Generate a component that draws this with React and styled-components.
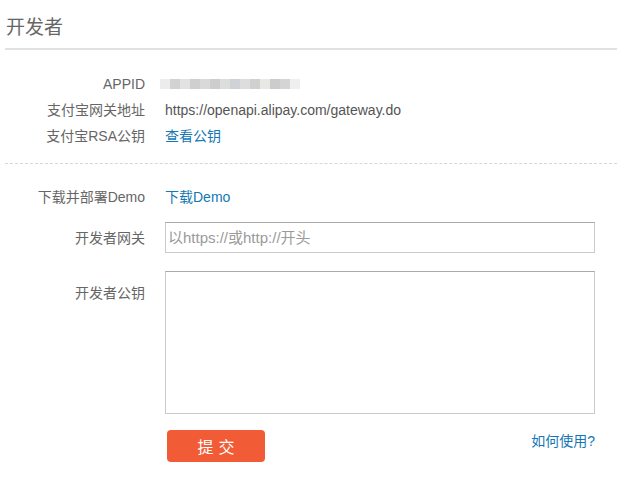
import React from "react";
import styled, { createGlobalStyle } from "styled-components";

const Global = createGlobalStyle`
  html, body { margin: 0; padding: 0; background: #fff; }
  body { font-family: "Liberation Sans", Arial, "Noto Sans CJK SC", sans-serif; color: #666; }
  * { box-sizing: border-box; }
`;

const Page = styled.div`
  width: 618px;
  padding: 0 1px 0 5px;
`;

const Header = styled.div`
  padding-top: 14px;
  padding-bottom: 6px;
  border-bottom: 2px solid #e1e1e1;
`;

const Title = styled.h2`
  margin: 0 0 0 1px;
  font-size: 19px;
  line-height: 28px;
  font-weight: normal;
  color: #666;
`;

const Section = styled.div`
  display: grid;
  grid-template-columns: 140px 430px;
  column-gap: 20px;
  align-items: center;
  padding-top: ${(p) => p.$top || 0}px;
  padding-bottom: ${(p) => p.$bottom || 0}px;
  border-bottom: ${(p) => (p.$dashed ? "1px dashed #d6d6d6" : "none")};
`;

const Label = styled.div`
  text-align: right;
  font-size: 14px;
  line-height: 26px;
  color: #666;
  align-self: ${(p) => (p.$top ? "start" : "center")};
  padding-top: ${(p) => p.$pt || 0}px;
  white-space: nowrap;
`;

const Value = styled.div`
  font-size: 14px;
  line-height: 26px;
  color: #555;
  white-space: nowrap;
`;

const Link = styled.a`
  color: #1577b3;
  text-decoration: none;
  font-size: 14px;
  line-height: 26px;
  cursor: pointer;
`;

const Blur = styled.div`
  display: flex;
  align-items: center;
  height: 26px;
  margin-left: -5px;
`;

const BlurBlock = styled.span`
  display: block;
  width: 10px;
  height: 10px;
  background: ${(p) => p.$c};
  filter: blur(0.6px);
`;

const Input = styled.input`
  width: 430px;
  height: 31px;
  border: 1px solid #cacaca;
  border-top-color: #a9a9a9;
  padding: 0 2px;
  font-size: 15px;
  font-family: inherit;
  color: #555;
  outline: none;
  &::placeholder { color: #9a9a9a; }
`;

const TextArea = styled.textarea`
  display: block;
  width: 430px;
  height: 143px;
  border: 1px solid #cacaca;
  border-top-color: #a9a9a9;
  resize: none;
  outline: none;
  font-family: inherit;
`;

const Actions = styled.div`
  display: flex;
  justify-content: space-between;
  align-items: center;
  padding-left: 2px;
`;

const Submit = styled.button`
  width: 98px;
  height: 32px;
  border: none;
  border-radius: 4px;
  background: #f15b35;
  color: #fff;
  font-size: 16px;
  font-family: "Noto Sans CJK SC", sans-serif;
  letter-spacing: 5px;
  padding: 0 0 0 5px;
  cursor: pointer;
`;

const HelpLink = styled(Link)`
  margin-top: -11px;
`;

const blurColors = [
  "#ececec", "#d2d2d2", "#e2e2e2", "#cfcfcf", "#d9d9d9", "#cdcdcd",
  "#dcdedc", "#d0d2d6", "#dddddd", "#d2cfcf", "#e8e8e6", "#cccccc",
  "#d4d4d4", "#efefef",
];

export default function App() {
  return (
    <Page>
      <Global />
      <Header>
        <Title>开发者</Title>
      </Header>

      <Section $top={21} $bottom={14} $dashed>
        <Label>APPID</Label>
        <Blur>
          {blurColors.map((c, i) => (
            <BlurBlock key={i} $c={c} />
          ))}
        </Blur>
        <Label>支付宝网关地址</Label>
        <Value>https://openapi.alipay.com/gateway.do</Value>
        <Label>支付宝RSA公钥</Label>
        <div>
          <Link>查看公钥</Link>
        </div>
      </Section>

      <Section $top={20}>
        <Label>下载并部署Demo</Label>
        <div>
          <Link>下载Demo</Link>
        </div>
      </Section>

      <Section $top={12}>
        <Label>开发者网关</Label>
        <div>
          <Input placeholder="以https://或http://开头" />
        </div>
      </Section>

      <Section $top={18}>
        <Label $top $pt={9}>开发者公钥</Label>
        <div>
          <TextArea />
        </div>
      </Section>

      <Section $top={16}>
        <div />
        <Actions>
          <Submit>提交</Submit>
          <HelpLink>如何使用?</HelpLink>
        </Actions>
      </Section>
    </Page>
  );
}
